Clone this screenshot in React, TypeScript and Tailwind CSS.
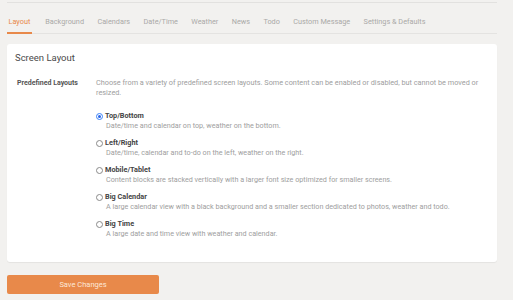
import React from 'react'

const tabs = ['Layout', 'Background', 'Calendars', 'Date/Time', 'Weather', 'News', 'Todo', 'Custom Message', 'Settings & Defaults']

const layouts = [
  { name: 'Top/Bottom', desc: 'Date/time and calendar on top, weather on the bottom.' },
  { name: 'Left/Right', desc: 'Date/time, calendar and to-do on the left, weather on the right.' },
  { name: 'Mobile/Tablet', desc: 'Content blocks are stacked vertically with a larger font size optimized for smaller screens.' },
  { name: 'Big Calendar', desc: 'A large calendar view with a black background and a smaller section dedicated to photos, weather and todo.' },
  { name: 'Big Time', desc: 'A large date and time view with weather and calendar.' },
]

export default function App() {
  return (
    <div className="w-[513px] h-[300px] bg-[#f2f1ef] overflow-hidden pl-[7px] pr-[16px] pt-[2px]" style={{ fontFamily: 'Roboto, sans-serif' }}>
      <div className="border-t border-[#e2e1df]" />

      <div className="flex gap-[13.4px] mt-[13px] border-b border-[#e4e3e1] text-[7.3px] leading-none">
        {tabs.map((t, i) => (
          <div
            key={t}
            className={
              i === 0
                ? 'pb-[7px] pt-[2px] px-[1.5px] text-[#e8894a] border-b-2 border-[#e8894a] -mb-px'
                : 'pb-[7px] pt-[2px] text-[#aaa9a7]'
            }
          >
            {t}
          </div>
        ))}
      </div>

      <div className="mt-[10px] bg-white rounded-[3px] shadow-[0_1px_1px_rgba(0,0,0,0.06)] h-[218px] px-[8px] pt-[7px]">
        <h2 className="text-[9.5px] text-[#4a4a4a] leading-[13px]">Screen Layout</h2>

        <div className="flex mt-[14px]">
          <div className="w-[81px] pl-[2px] text-[7px] font-bold text-[#555] leading-[10px]">Predefined Layouts</div>
          <div className="flex-1">
            <p className="text-[7.3px] text-[#9e9e9e] leading-[10px] pr-[4px]">
              Choose from a variety of predefined screen layouts. Some content can be enabled or disabled, but cannot be moved or resized.
            </p>
            <div className="mt-[13px] flex flex-col gap-[7px]">
              {layouts.map((l, i) => (
                <div key={l.name}>
                  <div className="flex items-center h-[10px]">
                    <span
                      className={
                        i === 0
                          ? 'w-[7px] h-[7px] rounded-full border border-[#3b82f6] flex items-center justify-center mr-[2px]'
                          : 'w-[7px] h-[7px] rounded-full border border-[#8a8a8a] mr-[2px]'
                      }
                    >
                      {i === 0 && <span className="w-[3px] h-[3px] rounded-full bg-[#2563eb]" />}
                    </span>
                    <span className="text-[7.3px] font-bold text-[#444]">{l.name}</span>
                  </div>
                  <div className="pl-[10px] text-[7.2px] text-[#9e9e9e] leading-[10px]">{l.desc}</div>
                </div>
              ))}
            </div>
          </div>
        </div>
      </div>

      <button className="mt-[13px] w-[152px] h-[19px] bg-[#e8894a] rounded-[2px] text-[7.5px] text-[#fde7d8] flex items-center justify-center">
        Save Changes
      </button>
    </div>
  )
}
